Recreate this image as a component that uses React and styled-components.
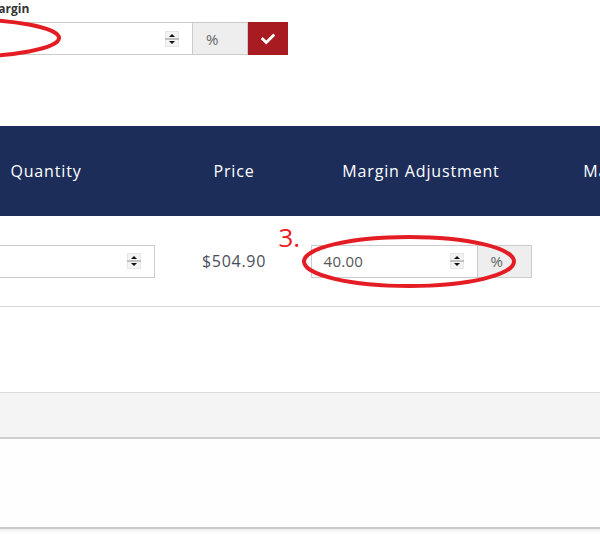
import React from "react";
import styled, { createGlobalStyle } from "styled-components";
import { FaCheck } from "react-icons/fa";

const GlobalStyle = createGlobalStyle`
  html, body {
    margin: 0;
    padding: 0;
    background: #ffffff;
    overflow: hidden;
  }
  body {
    font-family: "Open Sans", "Liberation Sans", sans-serif;
    color: #333;
  }
`;

const Page = styled.div`
  width: 600px;
  height: 543px;
  overflow: hidden;
  position: relative;
`;

// the screenshot is a crop of a wider page, so the content starts left of the window
const Canvas = styled.div`
  margin-left: -80px;
  width: 900px;
`;

const MarginField = styled.div`
  margin-left: 69px;
  padding-top: 1px;
  display: flex;
  flex-direction: column;
  gap: 5px;
`;

const FieldLabel = styled.label`
  margin-left: -2px;
  font-size: 12px;
  font-weight: 700;
  line-height: 16px;
  color: #333;
`;

const InputGroup = styled.div`
  position: relative;
  display: flex;
  width: ${(p) => p.width}px;
  height: 33px;
`;

const InputBox = styled.div`
  position: relative;
  flex: 1;
  display: flex;
  align-items: center;
  justify-content: space-between;
  padding: 0 13px 0 12px;
  border: 1px solid #cccccc;
  background: #fff;
  box-sizing: border-box;
  font-size: 15px;
  letter-spacing: 0.3px;
  color: #555;
`;

const Addon = styled.div`
  width: ${(p) => p.width}px;
  box-sizing: border-box;
  border: 1px solid #cccccc;
  border-left: none;
  background: #eeeeee;
  color: #666;
  font-size: 15px;
  display: flex;
  align-items: center;
  padding-left: 13px;
`;

const CheckButton = styled.button`
  width: 40px;
  border: none;
  background: #a81b21;
  color: #fff;
  display: flex;
  align-items: center;
  justify-content: center;
  padding: 0;
  font-size: 14px;
`;

const Spinner = () => (
  <svg width="14" height="16" viewBox="0 0 14 16">
    <rect x="0" y="0" width="14" height="16" fill="#e6e6e6" />
    <rect x="1" y="1" width="12" height="6" fill="#f3f3f3" />
    <rect x="1" y="9" width="12" height="6" fill="#f3f3f3" />
    <line x1="0" y1="8" x2="14" y2="8" stroke="#9a9a9a" strokeWidth="1" />
    <path d="M4 6 L7 3 L10 6 Z" fill="#111" />
    <path d="M4 10 L7 13 L10 10 Z" fill="#111" />
  </svg>
);

const Ellipse = styled.svg`
  position: absolute;
  left: ${(p) => p.left}px;
  top: ${(p) => p.top}px;
  pointer-events: none;
  overflow: visible;
`;

const Mark = ({ left, top, width, height }) => (
  <Ellipse left={left} top={top} width={width} height={height}>
    <ellipse
      cx={width / 2}
      cy={height / 2}
      rx={width / 2 - 2}
      ry={height / 2 - 2}
      fill="none"
      stroke="#e41d25"
      strokeWidth="4"
    />
  </Ellipse>
);

const StepNumber = styled.span`
  position: absolute;
  left: -32px;
  top: -21px;
  font-size: 26px;
  line-height: 26px;
  color: #ec1c24;
`;

const Table = styled.div`
  margin-top: 71px;
`;

const Row = styled.div`
  display: grid;
  grid-template-columns: 252px 124px 250px 202px;
  align-items: center;
`;

const HeadRow = styled(Row)`
  height: 90px;
  background: #1c2d5a;
  color: #fff;
  font-size: 16px;
  letter-spacing: 0.85px;
  line-height: 20px;
  padding-bottom: 1px;
  box-sizing: border-box;
`;

const BodyRow = styled(Row)`
  height: 90px;
  border-bottom: 1px solid #d6d6d6;
`;

const Cell = styled.div`
  display: flex;
  justify-content: center;
  align-items: center;
`;

const Price = styled.span`
  font-size: 16px;
  letter-spacing: 0.7px;
  color: #4a4e5a;
`;

const Footer = styled.div`
  margin-top: 85px;
  height: 44px;
  background: #f4f4f4;
  border-top: 1px solid #dcdcdc;
  border-bottom: 2px solid #cfcfcf;
  box-shadow: 0 2px 3px rgba(0, 0, 0, 0.06);
`;

const Panel = styled.div`
  height: 88px;
  background: #fefefe;
  border-bottom: 2px solid #cbcbcb;
  box-shadow: 0 2px 3px rgba(0, 0, 0, 0.08);
`;

export default function App() {
  return (
    <Page>
      <GlobalStyle />
      <Canvas>
        <MarginField>
          <FieldLabel>Margin</FieldLabel>
          <InputGroup width={299}>
            <InputBox>
              <span />
              <Spinner />
              <Mark left={-139} top={-6} width={210} height={42} />
            </InputBox>
            <Addon width={55}>%</Addon>
            <CheckButton>
              <FaCheck />
            </CheckButton>
          </InputGroup>
        </MarginField>

        <Table>
          <HeadRow>
            <Cell>Quantity</Cell>
            <Cell>Price</Cell>
            <Cell>Margin Adjustment</Cell>
            <Cell>Margin Amount</Cell>
          </HeadRow>
          <BodyRow>
            <Cell>
              <InputGroup width={218}>
                <InputBox>
                  <span>1</span>
                  <Spinner />
                </InputBox>
              </InputGroup>
            </Cell>
            <Cell>
              <Price>$504.90</Price>
            </Cell>
            <Cell>
              <InputGroup width={221}>
                <StepNumber>3.</StepNumber>
                <InputBox>
                  <span>40.00</span>
                  <Spinner />
                </InputBox>
                <Addon width={54}>%</Addon>
                <Mark left={-9} top={-10} width={214} height={53} />
              </InputGroup>
            </Cell>
            <Cell>
              <Price>$201.96</Price>
            </Cell>
          </BodyRow>
          <Footer />
          <Panel />
        </Table>
      </Canvas>
    </Page>
  );
}
